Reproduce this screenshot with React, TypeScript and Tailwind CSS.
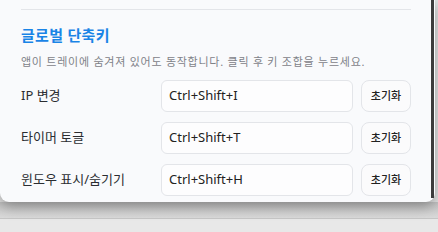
import React from "react";

const rows = [
  { label: "IP 변경", value: "Ctrl+Shift+I" },
  { label: "타이머 토글", value: "Ctrl+Shift+T" },
  { label: "윈도우 표시/숨기기", value: "Ctrl+Shift+H" },
];

export default function App() {
  return (
    <div
      className="w-[438px] h-[232px] overflow-hidden bg-[#e4e4e4] flex flex-col"
      style={{ fontFamily: '"Noto Sans", "Noto Sans CJK KR", sans-serif' }}
    >
      <div className="relative z-10 w-[435px] h-[202px] shrink-0 bg-[#f9fafc] rounded-b-[9px] shadow-[0_4px_14px_rgba(0,0,0,0.35)] flex">
        <div className="flex-1 pl-[21px] pr-[20px] flex flex-col">
          <div className="mt-[9px] h-px bg-[#e3e5e9]" />
          <div className="mt-[15px] h-[20px] leading-[20px] text-[15px] font-bold text-[#1a84e6] tracking-[0.3px]">
            글로벌 단축키
          </div>
          <div className="mt-[9px] h-[16px] leading-[16px] text-[11px] text-[#7f8288] tracking-[0.75px] whitespace-nowrap">
            앱이 트레이에 숨겨져 있어도 동작합니다. 클릭 후 키 조합을 누르세요.
          </div>
          <div className="mt-[10px] flex flex-col gap-[10px]">
            {rows.map((r) => (
              <div key={r.label} className="flex items-center h-[32px]">
                <div className="w-[140px] text-[13px] text-[#2b2d31]">{r.label}</div>
                <div className="w-[192px] h-[32px] rounded-[6px] border border-[#e3e5e9] bg-[#fdfdfe] flex items-center pl-[7px] text-[13px] text-[#222]">
                  {r.value}
                </div>
                <div className="ml-[8px] w-[50px] h-[32px] rounded-[8px] border border-[#e3e5e9] bg-[#fbfbfc] flex items-center justify-center text-[11px] font-medium text-[#222]">
                  초기화
                </div>
              </div>
            ))}
          </div>
        </div>
        <div className="w-[4px] flex flex-col">
          <div className="w-[3px] h-[198px] bg-[#3c3c3c]" />
        </div>
      </div>
      <div className="h-[16px] shrink-0 bg-[linear-gradient(#c4c4c4,#dadada)]" />
      <div className="flex-1 border-t border-[#c6c6c6] bg-[#e8e8e8]" />
    </div>
  );
}
